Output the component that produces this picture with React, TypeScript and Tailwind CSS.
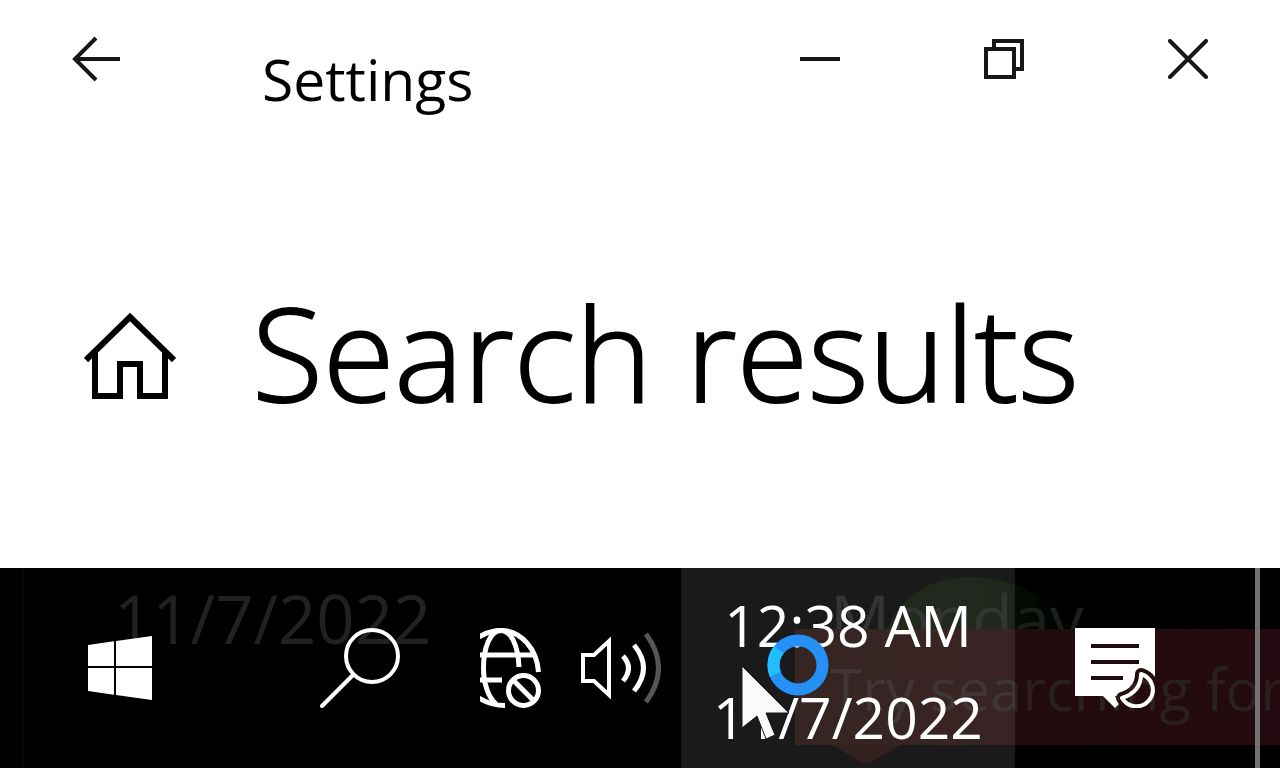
import type { ReactNode } from "react";

type CaptionButtonProps = {
  label: string;
  children: ReactNode;
};

function CaptionButton({ label, children }: CaptionButtonProps) {
  return (
    <button
      aria-label={label}
      className="flex h-[118px] w-[184px] items-center justify-center text-[#171717] hover:bg-black/10"
    >
      {children}
    </button>
  );
}

function TitleBar() {
  return (
    <header className="flex items-start">
      <button
        aria-label="Back"
        className="flex h-[118px] w-48 shrink-0 items-center justify-center text-[#171717]"
      >
        <svg width="48" height="48" viewBox="0 0 48 48" fill="none" stroke="currentColor" strokeWidth="4">
          <path d="M24 3 L3 24 L24 45 M4 24 H48" />
        </svg>
      </button>
      <span className="ml-[70px] mt-[39px] text-[57px] leading-[80px]">Settings</span>
      <div className="ml-auto flex">
        <CaptionButton label="Minimize">
          <svg width="40" height="40" viewBox="0 0 40 40" fill="none" stroke="currentColor" strokeWidth="4">
            <path d="M0 20 H40" />
          </svg>
        </CaptionButton>
        <CaptionButton label="Restore">
          <svg width="40" height="40" viewBox="0 0 40 40" fill="none" stroke="currentColor" strokeWidth="4">
            <path d="M2 10 H30 V38 H2 Z M10 10 V2 H38 V30 H30" />
          </svg>
        </CaptionButton>
        <CaptionButton label="Close">
          <svg width="40" height="40" viewBox="0 0 40 40" fill="none" stroke="currentColor" strokeWidth="4">
            <path d="M2 2 L38 38 M38 2 L2 38" strokeLinecap="round" />
          </svg>
        </CaptionButton>
      </div>
    </header>
  );
}

function StartIcon() {
  return (
    <svg width="64" height="64" viewBox="0 0 64 64" fill="currentColor">
      <path d="M0 9 L26 5.3 V30 H0 Z M28 5 L64 0 V30 H28 Z M0 32 H26 V58.7 L0 55 Z M28 32 H64 V64 L28 59 Z" />
    </svg>
  );
}

function SearchIcon() {
  return (
    <svg width="80" height="80" viewBox="0 0 80 80" fill="none" stroke="currentColor" strokeWidth="4">
      <circle cx="52" cy="28" r="26" />
      <path d="M33 47 L2 78" strokeLinecap="round" />
    </svg>
  );
}

function NetworkIcon() {
  return (
    <svg width="61" height="80" viewBox="0 0 61 80" fill="none" stroke="currentColor" strokeWidth="5">
      <path d="M-1 9 C7 4 14 2.5 21 2.5 C41 2.5 57 21 58.5 44" />
      <path d="M-1 70 C7 75 15 77.5 25 77.5" />
      <path d="M21 2.5 C10 2.5 3.5 20 3.5 40 C3.5 55 8 69 16 76" />
      <path d="M21 2.5 C31 2.5 38 17 39 39" />
      <path d="M0 27 H56 M0 52 H22" />
      <circle cx="43.5" cy="62.5" r="15" />
      <path d="M33 52 L54 73" />
    </svg>
  );
}

function VolumeIcon() {
  return (
    <svg width="80" height="80" viewBox="0 0 80 80" fill="none" stroke="currentColor" strokeWidth="4">
      <path d="M2 27 H13 L28 13 V67 L13 53 H2 Z" />
      <path d="M42 28 Q53 40 42 53 M53 17 Q72 40 53 63" strokeWidth="5" />
      <path d="M65 6 Q90 40 65 74" stroke="#565656" strokeWidth="5" />
    </svg>
  );
}

const moon = "M66 46 A16.5 16.5 0 1 1 47 70 Q66 64 66 46 Z";

function ActionCenterIcon() {
  return (
    <svg width="80" height="80" viewBox="0 0 80 80" fill="none">
      <mask id="bubble-cutout">
        <rect width="80" height="80" fill="white" />
        <path d="M16 18 H64 M16 34 H64 M16 50 H48" stroke="black" strokeWidth="4" />
        <path d={moon} fill="black" stroke="black" strokeWidth="12" strokeLinejoin="round" />
      </mask>
      <path mask="url(#bubble-cutout)" fill="currentColor" d="M0 0 H80 V68 H40 L44 76 L40 80 L28 68 H0 Z" />
      <path d={moon} stroke="currentColor" strokeWidth="4" strokeLinejoin="round" />
    </svg>
  );
}

// Windows behind the taskbar, faintly showing through its translucent surface
function Backdrop() {
  return (
    <div aria-hidden="true" className="pointer-events-none absolute inset-0 overflow-hidden whitespace-nowrap">
      <div className="absolute inset-y-0 left-[21px] w-[3px] bg-[#050505]" />
      <span className="absolute left-[114px] top-1.5 text-[67px] leading-[88px] text-[#212121]">11/7/2022</span>
      <svg className="absolute left-[780px] top-0" width="330" height="200" viewBox="0 0 330 200">
        <defs>
          <linearGradient id="globe-fade" x1="0" y1="0" x2="1" y2="0">
            <stop offset="0" stopColor="#081104" />
            <stop offset="0.6" stopColor="#071005" />
            <stop offset="1" stopColor="#000000" />
          </linearGradient>
        </defs>
        <path d="M108 61 C118 30 150 9 190 9 C235 9 276 32 292 61 Z" fill="url(#globe-fade)" />
        <path d="M50 176 H122 L93 193 Q86 197 79 193 Z" fill="#1c0807" />
      </svg>
      <span className="absolute left-[830px] top-1.5 text-[67px] leading-[88px] text-[#1b1f1b]">Monday</span>
      <div className="absolute left-[795px] right-0 top-[61px] h-[116px] bg-linear-to-r from-[#200d09] to-[#240a10]" />
      <span className="absolute left-[830px] top-[77px] text-[58px] leading-[88px] text-[#2b2020]">Try searching for</span>
    </div>
  );
}

function BusyCursor() {
  return (
    <svg
      aria-hidden="true"
      className="pointer-events-none absolute left-[736px] top-16"
      width="96"
      height="110"
      viewBox="0 0 96 110"
    >
      <path d="M6 34 V96 L21 84 L30 107 L39 103 L30 81 H53 Z" fill="#fafafa" stroke="#171717" strokeWidth="1" />
      <circle cx="62" cy="33" r="24.5" stroke="#2590f5" strokeWidth="12" fill="none" />
      <path d="M43 17.6 A24.5 24.5 0 0 0 39.4 42.4" fill="none" stroke="#20bdff" strokeWidth="12" />
    </svg>
  );
}

function Taskbar() {
  return (
    <footer className="relative h-[200px] bg-black text-white">
      <Backdrop />
      <div className="relative flex h-full">
        <button aria-label="Start" className="flex w-60 items-center justify-center">
          <StartIcon />
        </button>
        <button aria-label="Search" className="flex w-60 items-center justify-center">
          <SearchIcon />
        </button>
        <div className="ml-auto flex">
          <button aria-label="Network" className="flex items-center pr-10">
            <NetworkIcon />
          </button>
          <button aria-label="Volume" className="flex items-center pr-5">
            <VolumeIcon />
          </button>
          <button className="flex w-[334px] flex-col items-center justify-center bg-white/10 pt-1.5 text-[57px] leading-[92px]">
            <span>12:38 AM</span>
            <span>11/7/2022</span>
          </button>
          <button aria-label="Notifications" className="flex w-60 items-center pl-[60px]">
            <ActionCenterIcon />
          </button>
          <button aria-label="Show desktop" className="w-[25px] border-l-[5px] border-[#717171]" />
        </div>
      </div>
      <BusyCursor />
    </footer>
  );
}

export default function App() {
  return (
    <div className="flex min-h-screen flex-col bg-white font-['Open_Sans','Noto_Sans',sans-serif] text-black">
      <TitleBar />
      <main className="flex flex-1 items-start pl-[84px] pt-[139px]">
        <a href="#home" aria-label="Home" className="mt-[54px] shrink-0">
          <svg width="92" height="88" viewBox="0 0 92 88" fill="none" stroke="currentColor" strokeWidth="6">
            <path d="M2 48 L46 5 L90 48" />
            <path d="M11 41 V84 H36 V52 H56 V84 H81 V41" />
          </svg>
        </a>
        <h1 className="ml-[76px] text-[130px] font-light leading-[188px] [-webkit-text-stroke:2px_black]">
          Search results
        </h1>
      </main>
      <Taskbar />
    </div>
  );
}
